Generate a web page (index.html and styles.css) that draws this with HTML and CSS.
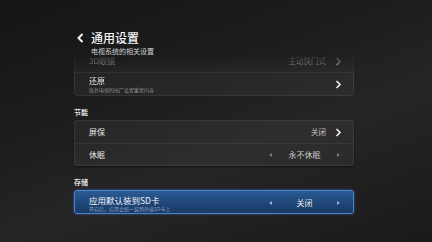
FILE: index.html
```html
<!DOCTYPE html>
<html lang="zh-CN">
<head>
    <meta charset="UTF-8">
    <title>通用设置</title>
    <link rel="stylesheet" href="styles.css">
</head>
<body>
    <div class="screen">
        <header class="page-head">
            <svg class="back" width="7" height="10" viewBox="0 0 7 10">
                <polyline points="5.5,1 1.5,5 5.5,9" fill="none" stroke="#f2f2f2" stroke-width="2"/>
            </svg>
            <div>
                <h1>通用设置</h1>
                <p class="sub">电视系统的相关设置</p>
            </div>
        </header>

        <div class="card faded">
            <div class="row">
                <span class="label">3D眼镜</span>
                <span class="value">主动快门式</span>
                <svg class="chev" width="7" height="9" viewBox="0 0 7 9"><polyline points="1.5,1 5,4.5 1.5,8" fill="none" stroke="#ddd" stroke-width="1.6"/></svg>
            </div>
            <div class="row tall">
                <div class="text">
                    <span class="label">还原</span>
                    <span class="hint">恢复电视的出厂设置重置内容</span>
                </div>
                <svg class="chev" width="7" height="9" viewBox="0 0 7 9"><polyline points="1.5,1 5,4.5 1.5,8" fill="none" stroke="#f0f0f0" stroke-width="1.6"/></svg>
            </div>
        </div>

        <div class="section">节能</div>
        <div class="card">
            <div class="row">
                <span class="label">屏保</span>
                <span class="value">关闭</span>
                <svg class="chev" width="7" height="9" viewBox="0 0 7 9"><polyline points="1.5,1 5,4.5 1.5,8" fill="none" stroke="#f0f0f0" stroke-width="1.6"/></svg>
            </div>
            <div class="row">
                <span class="label">休眠</span>
                <div class="picker">
                    <span class="tri left"></span>
                    <span class="value">永不休眠</span>
                    <span class="tri right"></span>
                </div>
            </div>
        </div>

        <div class="section">存储</div>
        <div class="card active">
            <div class="row tall">
                <div class="text">
                    <span class="label">应用默认装到SD卡</span>
                    <span class="hint">开启后，应用会统一装到外接SD卡上</span>
                </div>
                <div class="picker">
                    <span class="tri left"></span>
                    <span class="value">关闭</span>
                    <span class="tri right"></span>
                </div>
            </div>
        </div>
    </div>
</body>
</html>
```

FILE: styles.css
```css
* {
    margin: 0;
    padding: 0;
    box-sizing: border-box;
}

body {
    width: 432px;
    height: 242px;
    overflow: hidden;
    background: linear-gradient(160deg, #151515 0%, #1e1e1e 40%, #252525 60%, #1a1a1a 100%);
    font-family: "Noto Sans CJK SC", "Noto Sans", sans-serif;
    color: #e6e6e6;
}

.screen {
    width: 280px;
    margin-left: 74px;
    padding-top: 31px;
}

/* header */
.page-head {
    display: flex;
    align-items: flex-start;
    gap: 7px;
    position: relative;
    z-index: 1;
    margin-bottom: -7px;
}

.page-head .back {
    margin-top: 2px;
    margin-left: 3px;
}

h1 {
    font-size: 12px;
    line-height: 13px;
    font-weight: 500;
    color: #f4f4f4;
}

.page-head .sub {
    font-size: 7px;
    line-height: 9px;
    margin-top: 3px;
    color: #d0d0d0;
}

/* cards */
.card {
    background: rgba(255, 255, 255, 0.045);
    border: 1px solid rgba(255, 255, 255, 0.07);
    border-radius: 3px;
    box-shadow: 0 1px 2px rgba(0, 0, 0, 0.5);
}

.card.faded {
    -webkit-mask-image: linear-gradient(to bottom, transparent 0, rgba(0, 0, 0, 0.3) 12px, #000 24px);
    mask-image: linear-gradient(to bottom, transparent 0, rgba(0, 0, 0, 0.3) 12px, #000 24px);
}

.row {
    display: flex;
    align-items: center;
    height: 22px;
    padding: 0 11px 0 14px;
}

.row + .row {
    border-top: 1px solid rgba(255, 255, 255, 0.06);
}

.row.tall {
    height: 23px;
}

.row .label {
    font-size: 8px;
    line-height: 10px;
    color: #e8e8e8;
}

.row .text {
    display: flex;
    flex-direction: column;
    margin-top: 1px;
    margin-right: auto;
}

.row .hint {
    font-size: 5px;
    line-height: 6px;
    color: #8a8a8a;
    margin-top: 1px;
}

.row .value {
    margin-left: auto;
    font-size: 7.5px;
    line-height: 10px;
    color: #c8c8c8;
}

.row .chev {
    margin-left: 9px;
}

.picker {
    margin-left: auto;
    width: 71px;
    margin-right: 2px;
    display: flex;
    align-items: center;
    justify-content: space-between;
}

.picker .value {
    margin-left: 0;
    font-size: 8px;
}

.tri {
    width: 0;
    height: 0;
    border-top: 2.5px solid transparent;
    border-bottom: 2.5px solid transparent;
}

.tri.left {
    border-right: 3px solid #7a7a7a;
}

.tri.right {
    border-left: 3px solid #7a7a7a;
}

.section {
    font-size: 7px;
    line-height: 9px;
    font-weight: 700;
    color: #e0e0e0;
    padding: 12px 0 3px;
}

/* focused item */
.card.active {
    height: 24px;
    background: linear-gradient(to bottom, #2b5b96 0%, #1f4677 55%, #183a66 100%);
    border: 1px solid #4b83cc;
    box-shadow: 0 0 3px rgba(70, 130, 210, 0.6);
}

.card.active .label {
    font-size: 8.5px;
    color: #f4f6fa;
}

.card.active .hint {
    color: #8aa2c4;
}

.card.active .value {
    color: #f0f0f0;
}

.card.active .tri.left {
    border-right-color: #9ab3d6;
}

.card.active .tri.right {
    border-left-color: #9ab3d6;
}
```
